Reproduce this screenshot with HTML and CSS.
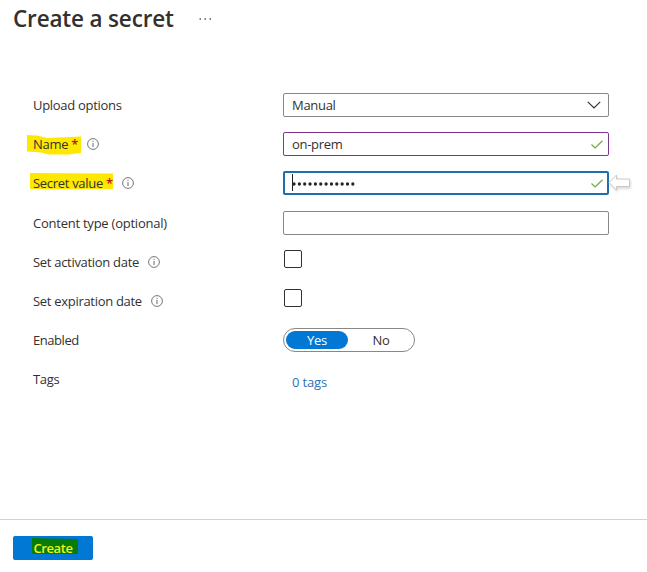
FILE: index.html
```html
<!DOCTYPE html>
<html lang="en">
<head>
<meta charset="utf-8">
<title>Create a secret</title>
<link rel="stylesheet" href="styles.css">
</head>
<body>
<svg class="defs" width="0" height="0">
  <symbol id="info" viewBox="0 0 12 12"><circle cx="6" cy="6" r="5.4" fill="none" stroke="#686868" stroke-width=".9"/><path d="M6 5v4M6 2.8v1.1" stroke="#686868" stroke-width="1"/></symbol>
  <symbol id="check" viewBox="0 0 12 9"><path d="M.5 4.5 4.1 8 11.5.7" fill="none" stroke="#6bad3c" stroke-width="1.2"/></symbol>
</svg>
<header class="header"><h1>Create a secret</h1><svg class="more" width="13" height="3" viewBox="0 0 13 3"><path d="M.5 1h1.5M5.5 1H7M10.500 1H12" stroke="#555" stroke-width="1.3"/></svg></header>
<main class="form">
  <div class="row"><label class="label">Upload options</label><div class="field"><span class="value">Manual</span><svg class="chevron" width="14" height="8" viewBox="0 0 14 8"><path d="M.8.8 7 7 13.200.8" fill="none" stroke="#333" stroke-width="1.2"/></svg></div></div>
  <div class="row"><label class="label name"><svg class="mark" width="54" height="20" viewBox="0 0 54 20"><path d="M0 0 10 .5 20 3 54 1.500V18L42 19.500H22L14 17.500 0 16.500Z" fill="#ffe800"/></svg><span class="label-text">Name <b class="req">*</b></span><svg class="info" width="12" height="12"><use href="#info"/></svg></label><div class="field valid"><span class="value">on-prem</span><svg class="check" width="12" height="9"><use href="#check"/></svg></div></div>
  <div class="row tall"><label class="label secret"><svg class="mark" width="83" height="17" viewBox="0 0 83 17"><path d="M0 0 83 .5V16L20 16.500 0 16Z" fill="#ffe800"/></svg><span class="label-text">Secret value <b class="req">*</b></span><svg class="info" width="12" height="12"><use href="#info"/></svg></label><div class="field focused"><i class="caret"></i><svg class="dots" width="63" height="4" viewBox="0 0 63 4"><path d="M2 2H62" stroke="#252525" stroke-width="3.3" stroke-linecap="round" stroke-dasharray="0 5.350"/></svg><svg class="check" width="12" height="9"><use href="#check"/></svg><svg class="arrow" width="26" height="20" viewBox="0 0 26 20"><path d="M8.500 2 1 9.500 8.500 17V13.500H21.500V6H8.500Z" fill="#fff" stroke="#c8c8c8"/></svg></div></div>
  <div class="row"><label class="label content">Content type (optional)</label><div class="field"></div></div>
  <div class="row"><label class="label date">Set activation date<svg class="info" width="12" height="12"><use href="#info"/></svg></label><div class="checkbox"></div></div>
  <div class="row"><label class="label date">Set expiration date<svg class="info" width="12" height="12"><use href="#info"/></svg></label><div class="checkbox"></div></div>
  <div class="row"><label class="label enabled">Enabled</label><div class="toggle"><span class="on">Yes</span><span class="off">No</span></div></div>
  <div class="row"><label class="label">Tags</label><a class="tags">0 tags</a></div>
</main>
<footer class="footer"><button class="create"><svg class="create-mark" width="46" height="18" viewBox="0 0 46 18"><path d="M0 1 15 1.500 46 2V17H0Z" fill="#087b08"/></svg><span class="create-text">Create</span></button></footer>
</body>
</html>
```

FILE: styles.css
```css
* { box-sizing: border-box; }
body { margin: 0; width: 647px; height: 572px; overflow: hidden; display: flex; flex-direction: column; background: #fff; color: #323130; font: 13px/24px "Open Sans", sans-serif; }
svg { display: block; flex: none; }
.defs { position: absolute; }
.header { height: 93px; padding: 4px 0 0 13px; display: flex; align-items: flex-start; }
h1 { margin: 0; width: 186px; font: 600 22.5px/30px "Open Sans", sans-serif; letter-spacing: -.17px; white-space: nowrap; }
.more { margin-top: 14px; }
.form { flex: 1; padding-left: 33px; }
.row { display: flex; align-items: flex-start; height: 39px; }
.tall { height: 40px; }
.label { position: relative; width: 250px; height: 24px; display: flex; align-items: center; white-space: nowrap; letter-spacing: -.3px; }
.content { letter-spacing: -.24px; }
.enabled { letter-spacing: -.45px; }
.label-text { position: relative; }
.req { color: #b31b10; font-weight: 600; }
.info { margin-left: 9px; }
.mark { position: absolute; left: -6px; top: 3px; }
.secret .mark { left: -3px; top: 2px; }
.field { position: relative; width: 326px; height: 24px; border: 1px solid #8a8886; border-radius: 2px; padding: 0 8px; display: flex; align-items: center; }
.valid { border-color: #81358f; }
.focused { border: 2px solid #1c6eaf; padding: 0 7px; }
.value { line-height: 22px; letter-spacing: -.3px; }
.chevron { margin-left: auto; margin-right: -1px; }
.check { margin-left: auto; margin-right: -3px; }
.caret { width: 1px; height: 17px; background: #222; margin-top: -2px; }
.dots { margin-left: -1px; margin-top: 1px; }
.arrow { position: absolute; left: 323px; top: 0; filter: drop-shadow(1px 2px 1px #0002); }
.checkbox { width: 18px; height: 18px; margin-left: 1px; border: 1px solid #323130; border-radius: 2px; }
.toggle { width: 132px; height: 24px; border: 1px solid #8a8886; border-radius: 12px; padding: 2px; display: flex; line-height: 18px; text-align: center; letter-spacing: -.3px; }
.on { width: 62px; height: 18px; color: #fff; background: #0078d4; border-radius: 9px; }
.off { flex: 1; padding-left: 2px; }
.tags { color: #2874b8; margin: 3px 0 0 9px; letter-spacing: -.15px; }
.footer { height: 53px; border-top: 1px solid #d2d2d2; padding: 16px 13px; }
.create { position: relative; display: block; width: 80px; height: 24px; padding: 0; border: 0; border-radius: 2px; background: #0078d4; color: #f3f51a; font: 600 13px/23px "Open Sans", sans-serif; letter-spacing: -.4px; }
.create-mark { position: absolute; left: 19px; top: 1px; }
.create-text { position: relative; }
```
